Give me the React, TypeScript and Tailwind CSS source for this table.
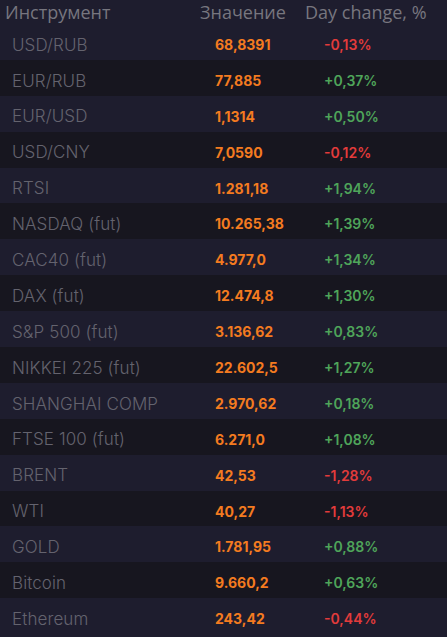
const rows: [string, string, string][] = [
  ["USD/RUB", "68,8391", "-0,13%"],
  ["EUR/RUB", "77,885", "+0,37%"],
  ["EUR/USD", "1,1314", "+0,50%"],
  ["USD/CNY", "7,0590", "-0,12%"],
  ["RTSI", "1.281,18", "+1,94%"],
  ["NASDAQ (fut)", "10.265,38", "+1,39%"],
  ["CAC40 (fut)", "4.977,0", "+1,34%"],
  ["DAX (fut)", "12.474,8", "+1,30%"],
  ["S&P 500 (fut)", "3.136,62", "+0,83%"],
  ["NIKKEI 225 (fut)", "22.602,5", "+1,27%"],
  ["SHANGHAI COMP", "2.970,62", "+0,18%"],
  ["FTSE 100 (fut)", "6.271,0", "+1,08%"],
  ["BRENT", "42,53", "-1,28%"],
  ["WTI", "40,27", "-1,13%"],
  ["GOLD", "1.781,95", "+0,88%"],
  ["Bitcoin", "9.660,2", "+0,63%"],
  ["Ethereum", "243,42", "-0,44%"],
];

export default function App() {
  return (
    <div className="w-[447px] h-[637px] bg-[#1e1d2e] overflow-hidden">
      {/* header */}
      <div className="flex h-[24px] items-end text-[18px] leading-none text-[#77767f] font-['Open_Sans',sans-serif]">
        <div className="w-[200px] pl-[5px] pb-[3px]">Инструмент</div>
        <div className="w-[105px] pb-[3px]">Значение</div>
        <div className="pb-[3px]">Day change, %</div>
      </div>

      {rows.map(([name, value, change], i) => (
        <div
          key={name}
          className={`flex h-[35.9px] items-center pt-[5px] ${i % 2 === 1 ? "bg-[#17161f]" : "bg-[#1e1d2e]"}`}
        >
          <div className="w-[215px] pl-[12px] pt-[2px] text-[17px] font-light tracking-[0.1px] text-[#64636e] font-['Inter',sans-serif]">
            {name}
          </div>
          <div className="w-[109px] text-[14px] font-bold text-[#f47b20] font-['Inter',sans-serif]">
            {value}
          </div>
          <div
            className={`text-[14px] font-semibold font-['Inter',sans-serif] ${change.startsWith("-") ? "text-[#e23b3b]" : "text-[#4fa55a]"}`}
          >
            {change}
          </div>
        </div>
      ))}
    </div>
  );
}
